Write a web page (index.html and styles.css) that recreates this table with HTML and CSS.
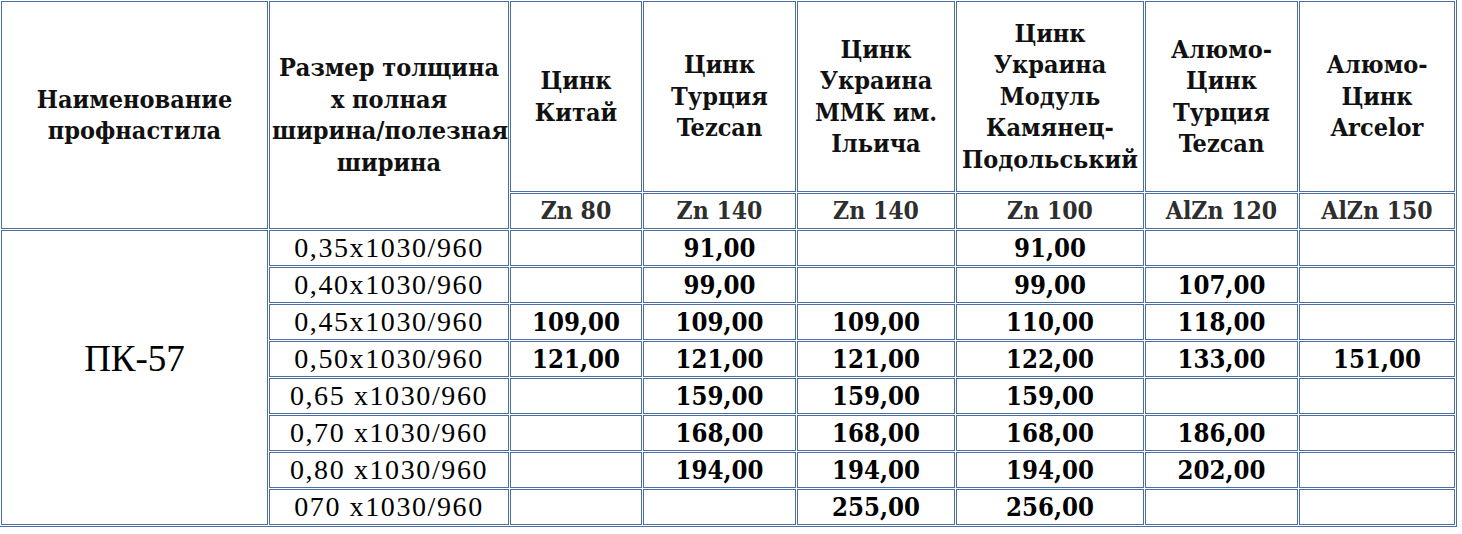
FILE: index.html
```html
<!DOCTYPE html>
<html lang="ru">
<head>
<meta charset="utf-8">
<title>Профнастил ПК-57</title>
<link rel="stylesheet" href="styles.css">
</head>
<body>
<table class="price">
  <colgroup>
    <col class="c1"><col class="c2"><col class="c3"><col class="c4"><col class="c5"><col class="c6"><col class="c7"><col class="c8">
  </colgroup>
  <thead>
    <tr class="h1">
      <th rowspan="2">Наименование<br>профнастила</th>
      <th rowspan="2">Размер толщина<br>х полная<br>ширина/полезная<br>ширина</th>
      <th>Цинк<br>Китай</th>
      <th>Цинк<br>Турция<br>Tezcan</th>
      <th>Цинк<br>Украина<br>ММК им.<br>Ільича</th>
      <th>Цинк<br>Украина<br>Модуль<br>Камянец-<br>Подольський</th>
      <th>Алюмо-<br>Цинк<br>Турция<br>Tezcan</th>
      <th>Алюмо-<br>Цинк<br>Arcelor</th>
    </tr>
    <tr class="h2">
      <th class="zn">Zn 80</th>
      <th class="zn">Zn 140</th>
      <th class="zn">Zn 140</th>
      <th class="zn">Zn 100</th>
      <th class="zn">AlZn 120</th>
      <th class="zn">AlZn 150</th>
    </tr>
  </thead>
  <tbody>
    <tr><td rowspan="8" class="name">ПК-57</td><td class="size">0,35x1030/960</td><td></td><td>91,00</td><td></td><td>91,00</td><td></td><td></td></tr>
    <tr><td class="size">0,40x1030/960</td><td></td><td>99,00</td><td></td><td>99,00</td><td>107,00</td><td></td></tr>
    <tr><td class="size">0,45x1030/960</td><td>109,00</td><td>109,00</td><td>109,00</td><td>110,00</td><td>118,00</td><td></td></tr>
    <tr><td class="size">0,50x1030/960</td><td>121,00</td><td>121,00</td><td>121,00</td><td>122,00</td><td>133,00</td><td>151,00</td></tr>
    <tr><td class="size">0,65 x1030/960</td><td></td><td>159,00</td><td>159,00</td><td>159,00</td><td></td><td></td></tr>
    <tr><td class="size">0,70 x1030/960</td><td></td><td>168,00</td><td>168,00</td><td>168,00</td><td>186,00</td><td></td></tr>
    <tr><td class="size">0,80 x1030/960</td><td></td><td>194,00</td><td>194,00</td><td>194,00</td><td>202,00</td><td></td></tr>
    <tr><td class="size">070 x1030/960</td><td></td><td></td><td>255,00</td><td>256,00</td><td></td><td></td></tr>
  </tbody>
</table>
</body>
</html>
```

FILE: styles.css
```css
html, body {
  margin: 0;
  padding: 0;
  background: #ffffff;
}

.price {
  margin: -1px 0 0 -1px;
  width: 1458px;
  table-layout: fixed;
  border-collapse: separate;
  border-spacing: 1px;
  border: 1px solid #4b6ea3;
  font-family: "Liberation Serif", "Times New Roman", serif;
  color: #000;
}

.c1 { width: 267px; }
.c2 { width: 240px; }
.c3 { width: 132px; }
.c4 { width: 153px; }
.c5 { width: 158px; }
.c6 { width: 188px; }
.c7 { width: 153px; }
.c8 { width: 156px; }

.price th,
.price td {
  box-sizing: border-box;
  border: 1px solid #4b6ea3;
  padding: 0 2px;
  text-align: center;
  vertical-align: middle;
  white-space: nowrap;
}

.price th {
  font-family: "DejaVu Serif Condensed", "DejaVu Serif", serif;
  font-weight: bold;
  font-size: 25px;
  line-height: 31.5px;
  color: #111;
}

.h1 th { height: 191px; }
.h2 th { height: 36px; }

.price th.zn {
  font-size: 24.5px;
  line-height: 30px;
  color: #2e2e2e;
}

.price td {
  height: 36px;
  font-family: "DejaVu Serif Condensed", "DejaVu Serif", serif;
  font-weight: bold;
  font-size: 25.5px;
  line-height: 34px;
}

.price td.size {
  font-family: "Liberation Serif", "Times New Roman", serif;
  font-weight: normal;
  font-size: 28px;
  letter-spacing: 1.6px;
}

.price td.name {
  font-family: "Liberation Serif", "Times New Roman", serif;
  font-weight: normal;
  font-size: 37px;
  padding-bottom: 38px;
}
```
